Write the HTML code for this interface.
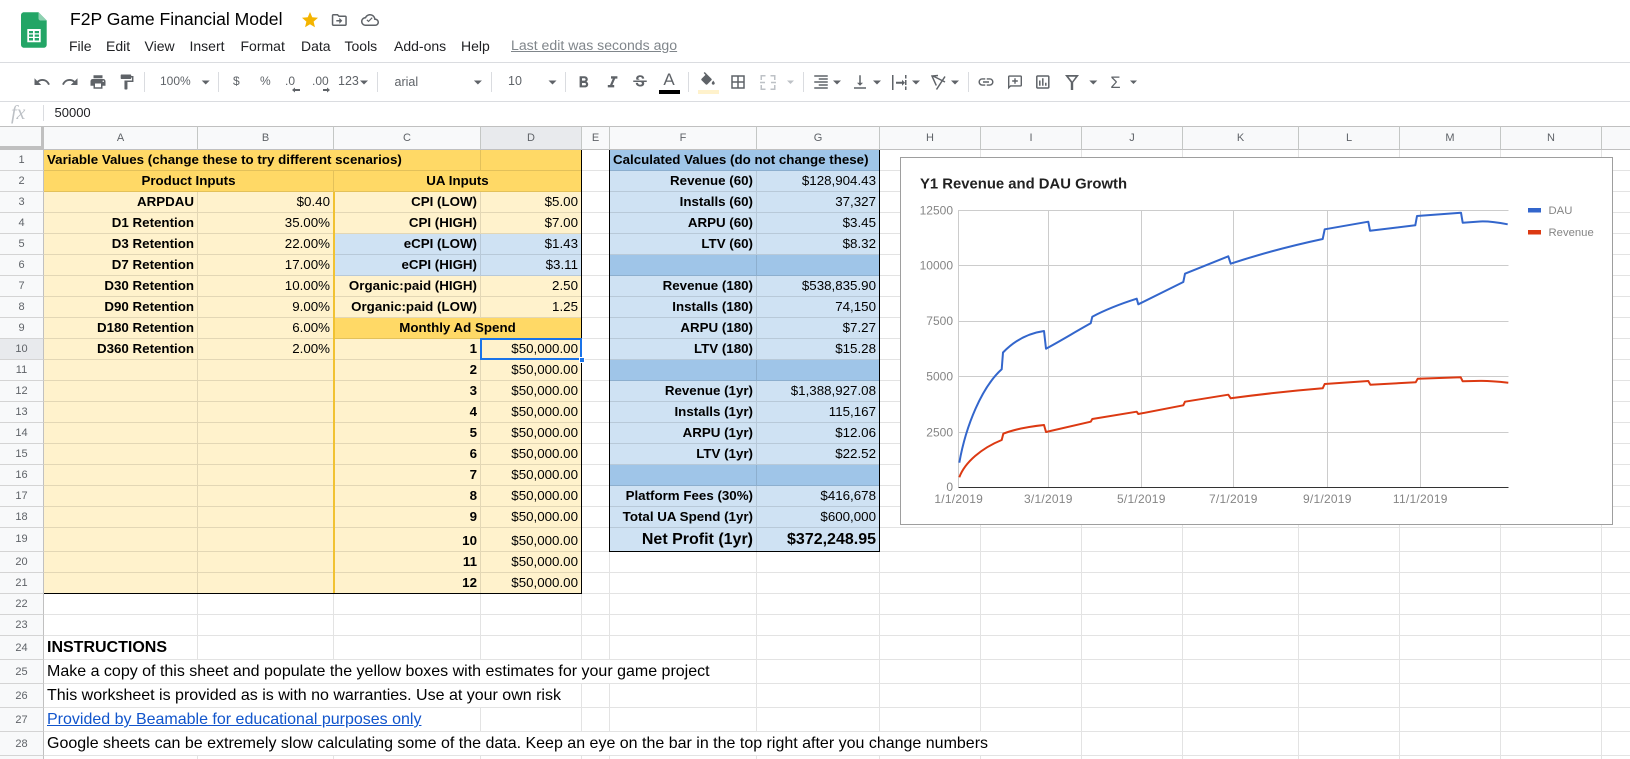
<!DOCTYPE html>
<html><head><meta charset="utf-8"><title>F2P Game Financial Model</title>
<style>
html,body{margin:0;padding:0;background:#fff;width:1630px;height:759px;overflow:hidden}
body{font-family:"Liberation Sans",Arial,sans-serif;color:#000;position:relative}
.a{position:absolute;white-space:nowrap;line-height:1}
.m{top:39px;font-size:14px;color:#202124}
.g{color:#5f6368}
#w{position:absolute;left:0;top:126px;width:1630px;height:633px;overflow:hidden}
table{border-collapse:separate;border-spacing:0;table-layout:fixed;width:1662px;font-size:13.33px;line-height:1}
td,th{box-sizing:border-box;padding:0 3px;white-space:nowrap;border-right:1px solid rgba(0,0,0,.11);border-bottom:1px solid rgba(0,0,0,.11);vertical-align:middle;font-weight:normal;text-align:left}
tr{height:21px}
tr.t{height:24px}
thead tr{height:24px}
thead th{background:#f8f9fa;border-right:1px solid #c4c7c5;border-bottom:1px solid #c0c0c0;border-top:1px solid #c0c0c0;text-align:center;font-size:11px;color:#5f6368;padding:0}
tbody th{background:#f8f9fa;border-right:1px solid #c0c0c0;border-bottom:1px solid #d4d4d4;text-align:center;font-size:11px;color:#5f6368;padding:0}
thead th.s,tbody th.s{background:#e8eaed}
.h{background:#ffd966}.l{background:#fff2cc}.b{background:#cfe2f3}.d{background:#9fc5e8}
.B{font-weight:bold}.R{text-align:right}.C{text-align:center}
.X{font-size:16px;padding-top:1px}
tr.x th{padding-top:2px}
td.P{padding-top:3px}
.N{font-size:16px;font-weight:bold;text-align:right}
a{color:#1155cc;text-decoration:underline}
</style></head><body>

<svg class="a" style="left:0;top:0" width="1630" height="126" viewBox="0 0 1630 126">
<path d="M24 12.300h14.500l8.200 8.200v24.200c0 1.700-1.300 3-3 3H24c-1.700 0-3-1.300-3-3V15.300c0-1.700 1.300-3 3-3z" fill="#23a566"/>
<path d="M38.500 12.300l8.200 8.200h-6.200c-1.100 0-2-.9-2-2z" fill="#8ed1b1"/>
<path d="M27.300 29h13.400v13.300H27.300zM29 31v2.300h4V31zm5.700 0v2.300H39V31zM29 34.500v2.300h4v-2.300zm5.700 0v2.300H39v-2.300zM29 38v2.500h4V38zm5.700 0v2.500H39V38z" fill="#fff" fill-rule="evenodd"/>
<g transform="translate(300.400,10.400) scale(.8)"><path fill="#f4b400" d="M12 17.270L18.180 21l-1.640-7.030L22 9.240l-7.190-.61L12 2 9.190 8.630 2 9.240l5.460 4.730L5.820 21z"/></g>
<g fill="#5f6368">
<g transform="translate(330.300,11) scale(.75)"><path d="M20 6h-8l-2-2H4c-1.100 0-1.990.9-1.990 2L2 18c0 1.100.9 2 2 2h16c1.100 0 2-.9 2-2V8c0-1.100-.9-2-2-2zm0 12H4V6h5.170l2 2H20v10zm-8-4H8v-2h4V9l4 4-4 4z"/></g>
<g transform="translate(361,11) scale(.75)"><path d="M19.350 10.040C18.670 6.590 15.640 4 12 4 9.110 4 6.600 5.640 5.350 8.040 2.340 8.360 0 10.910 0 14c0 3.310 2.690 6 6 6h13c2.760 0 5-2.240 5-5 0-2.640-2.050-4.780-4.650-4.960zM19 18H6c-2.210 0-4-1.790-4-4 0-2.050 1.530-3.760 3.560-3.970l1.070-.11.5-.95C8.080 7.140 9.940 6 12 6c2.620 0 4.880 1.860 5.390 4.430l.3 1.500 1.530.11c1.560.1 2.780 1.410 2.780 2.960 0 1.650-1.350 3-3 3zM10 15l-2.700-2.700 1.100-1.100 1.600 1.600 4.400-4.400 1.100 1.100z"/></g>

<g transform="translate(33,73) scale(.75)"><path d="M12.500 8c-2.650 0-5.050.99-6.900 2.600L2 7v9h9l-3.620-3.620c1.390-1.160 3.160-1.880 5.120-1.880 3.540 0 6.550 2.310 7.600 5.500l2.370-.78C21.080 11.030 17.150 8 12.500 8z"/></g>
<g transform="translate(61,73) scale(.75)"><path d="M18.400 10.600C16.550 8.990 14.150 8 11.500 8c-4.650 0-8.580 3.030-9.960 7.220L3.900 16c1.050-3.190 4.050-5.500 7.600-5.500 1.950 0 3.730.72 5.120 1.880L13 16h9V7l-3.600 3.600z"/></g>
<g transform="translate(89,73) scale(.75)"><path d="M19 8H5c-1.660 0-3 1.340-3 3v6h4v4h12v-4h4v-6c0-1.660-1.340-3-3-3zm-3 11H8v-5h8v5zm3-7c-.55 0-1-.45-1-1s.45-1 1-1 1 .45 1 1-.45 1-1 1zm-1-9H6v4h12V3z"/></g>
<g transform="translate(117.700,73) scale(.75)"><path d="M18 4V3c0-.55-.45-1-1-1H5c-.55 0-1 .45-1 1v4c0 .55.45 1 1 1h12c.55 0 1-.45 1-1V6h1v4H9v11c0 .55.45 1 1 1h2c.55 0 1-.45 1-1v-9h8V4h-3z"/></g>
<path d="M201.700 80.500h8l-4 4zM360 80.500h8l-4 4zM473.900 80.500h8l-4 4zM548.500 80.500h8l-4 4zM833 80.500h8l-4 4zM873 80.500h8l-4 4zM912 80.500h8l-4 4zM951 80.500h8l-4 4zM1089.300 80.500h8l-4 4zM1130 80.500h7l-3.500 3.500z"/>
<path d="M300 89h-5v-1.500l-3 2.500 3 2.500V91h5zM323 89h4v-1.500l3 2.500-3 2.500V91h-4z"/>

<g transform="translate(574,73) scale(.8)"><path d="M15.600 10.790c.97-.67 1.650-1.770 1.650-2.790 0-2.260-1.750-4-4-4H7v14h7.040c2.090 0 3.710-1.700 3.710-3.790 0-1.520-.86-2.820-2.150-3.420zM10 6.500h3c.83 0 1.500.67 1.500 1.500s-.67 1.500-1.500 1.500h-3v-3zm3.500 9H10v-3h3.500c.83 0 1.500.67 1.500 1.500s-.67 1.500-1.500 1.500z"/></g>
<g transform="translate(603,73) scale(.8)"><path d="M10 4v3h2.210l-3.420 8H6v3h8v-3h-2.210l3.420-8H18V4z"/></g>
<g transform="translate(631,73) scale(.75)"><path d="M6.850 7.080C6.850 4.370 9.450 3 12.240 3c1.640 0 3 .49 3.900 1.280.77.65 1.460 1.730 1.460 3.240h-3.010c0-.31-.05-.59-.15-.85-.29-.86-1.200-1.280-2.250-1.280-1.860 0-2.340 1.020-2.340 1.700 0 .48.25.88.74 1.210.38.25.77.48 1.410.7H7.390c-.21-.34-.54-.89-.54-1.920zM21 12v-2H3v2h9.620c1.150.45 1.960.75 1.960 1.970 0 1-.81 1.670-2.280 1.670-1.540 0-2.930-.54-2.930-2.510H6.400c0 .55.08 1.130.24 1.580.81 2.290 3.290 3.300 5.670 3.300 2.270 0 5.300-.89 5.300-4.050 0-.3-.01-1.160-.48-1.960H21V12z"/></g>
<text x="669" y="85" font-family="Liberation Sans" font-size="17" text-anchor="middle">A</text>
<g transform="translate(699,72) scale(.75)"><path d="M16.560 8.940L7.620 0 6.210 1.410l2.380 2.380-5.150 5.150c-.59.59-.59 1.540 0 2.120l5.500 5.500c.29.29.68.44 1.060.44s.77-.15 1.060-.44l5.500-5.500c.59-.58.59-1.530 0-2.120zM19 11.500s-2 2.170-2 3.500c0 1.100.9 2 2 2s2-.9 2-2c0-1.330-2-3.500-2-3.500z"/></g>
<g transform="translate(729,73) scale(.75)"><path d="M3 3v18h18V3H3zm8 16H5v-6h6v6zm0-8H5V5h6v6zm8 8h-6v-6h6v6zm0-8h-6V5h6v6z"/></g>
<g transform="translate(812,73) scale(.75)"><path d="M3 21h18v-2H3v2zm6-4h12v-2H9v2zm-6-4h18v-2H3v2zm6-4h12V7H9v2zM3 3v2h18V3H3z"/></g>
<g transform="translate(851,73) scale(.75)"><path d="M16 13h-3V3h-2v10H8l4 4 4-4zM4 19v2h16v-2H4z"/></g>
<path d="M892 75h1.500v15H892zM905 75h1.500v3.500H905zM905 80h1.500v5H905zM905 86.500h1.500V90H905zM896 81.800h6v-2l3 3-3 3v-2h-6z"/>
<g transform="translate(977,73) scale(.75)"><path d="M3.900 12c0-1.710 1.390-3.100 3.100-3.100h4V7H7c-2.760 0-5 2.240-5 5s2.240 5 5 5h4v-1.900H7c-1.710 0-3.100-1.390-3.100-3.100zM8 13h8v-2H8v2zm9-6h-4v1.900h4c1.710 0 3.100 1.390 3.100 3.100s-1.390 3.100-3.100 3.100h-4V17h4c2.760 0 5-2.240 5-5s-2.240-5-5-5z"/></g>
<g transform="translate(1006.600,74) scale(.7)"><path d="M20 2H4c-1.100 0-2 .9-2 2v18l4-4h14c1.100 0 2-.9 2-2V4c0-1.100-.9-2-2-2zm0 14H5.170L4 17.170V4h16v12zM11 6h2v3h3v2h-3v3h-2v-3H8V9h3z"/></g>
<g transform="translate(1033.800,73) scale(.75)"><path d="M19 3H5c-1.100 0-2 .9-2 2v14c0 1.100.9 2 2 2h14c1.100 0 2-.9 2-2V5c0-1.100-.9-2-2-2zm0 16H5V5h14v14zM7 10h2v7H7zm4-3h2v10h-2zm4 6h2v4h-2z"/></g>
<path d="M1065 75h14l-5.800 7.500v7.500h-2.400v-7.500zM1068.500 76.800l3.700 4.700 3.400-4.700z" fill-rule="evenodd"/>
<text x="1115.500" y="88" font-family="Liberation Sans" font-size="16.500" text-anchor="middle">Σ</text>
</g>
<path d="M938 75.500l-6 .5 4.300 9.500M933 76l12 6M945 76.500l-8.500 13" fill="none" stroke="#5f6368" stroke-width="1.500"/>
<path d="M760.500 75h5v1.500h-5zM770.500 75h5v1.500h-5zM760.500 75h1.500v5h-1.500zM774 75h1.500v5H774zM760.500 85h1.500v5h-1.500zM774 85h1.500v5H774zM760.500 88.500h5V90h-5zM770.500 88.500h5V90h-5zM760 81.800h5v1.500h-5zM771 81.800h5v1.500h-5z" fill="#bdc1c6"/>
<path d="M787 80.500h7l-3.500 3.500z" fill="#bdc1c6"/>
<rect x="659" y="90" width="21" height="4" fill="#000"/>
<rect x="698" y="90" width="21" height="4" fill="#fff2cc"/>
<g stroke="#dadce0"><path d="M0 62.500h1630M0 101.500h1630M144.500 72v20M218.500 72v20M377.500 72v20M491.500 72v20M565.500 72v20M688.500 72v20M803.500 72v20M968.500 72v20"/></g>
<path d="M43.500 105v16" stroke="#dadce0"/>
</svg>

<div class="a" style="left:70px;top:11px;font-size:17.570px;color:#000">F2P Game Financial Model</div>
<div class="a m" style="left:69px">File</div>
<div class="a m" style="left:106px">Edit</div>
<div class="a m" style="left:144.500px">View</div>
<div class="a m" style="left:189.500px">Insert</div>
<div class="a m" style="left:240.500px">Format</div>
<div class="a m" style="left:301px">Data</div>
<div class="a m" style="left:344.500px">Tools</div>
<div class="a m" style="left:394px">Add-ons</div>
<div class="a m" style="left:461px">Help</div>
<div class="a" style="left:511px;top:38px;font-size:14.100px;color:#80868b;text-decoration:underline">Last edit was seconds ago</div>

<div class="a g" style="left:160px;top:75px;font-size:12px">100%</div>
<div class="a g" style="left:233px;top:75px;font-size:12px">$</div>
<div class="a g" style="left:260px;top:75px;font-size:12px">%</div>
<div class="a g" style="left:285px;top:75px;font-size:12px">.0</div>
<div class="a g" style="left:312px;top:75px;font-size:12px">.00</div>
<div class="a g" style="left:338px;top:75px;font-size:12.500px">123</div>
<div class="a g" style="left:394.500px;top:76px;font-size:12.500px">arial</div>
<div class="a g" style="left:508px;top:75px;font-size:12.500px">10</div>
<div class="a" style="left:11px;top:103px;font-family:'Liberation Serif',serif;font-style:italic;font-size:20px;color:#bdc1c6">fx</div>
<div class="a" style="left:54.500px;top:106px;font-size:13px;color:#202124">50000</div>

<div id="w"><table>
<colgroup><col style="width:44px"><col style="width:154px"><col style="width:136px"><col style="width:147px"><col style="width:101px"><col style="width:28px"><col style="width:147px"><col style="width:123px"><col style="width:101px"><col style="width:101px"><col style="width:101px"><col style="width:116px"><col style="width:101px"><col style="width:101px"><col style="width:101px"><col style="width:60px"></colgroup>
<thead><tr><th></th><th>A</th><th>B</th><th>C</th><th class="s">D</th><th>E</th><th>F</th><th>G</th><th>H</th><th>I</th><th>J</th><th>K</th><th>L</th><th>M</th><th>N</th><th></th></tr></thead>
<tbody>
<tr><th>1</th><td class="h B" colspan="3">Variable Values (change these to try different scenarios)</td><td class="h"></td><td></td><td class="d B" colspan="2">Calculated Values (do not change these)</td><td></td><td></td><td></td><td></td><td></td><td></td><td></td><td></td></tr>
<tr><th>2</th><td class="h B C" colspan="2">Product Inputs</td><td class="h B C" colspan="2">UA Inputs</td><td></td><td class="b B R">Revenue (60)</td><td class="b R">$128,904.43</td><td></td><td></td><td></td><td></td><td></td><td></td><td></td><td></td></tr>
<tr><th>3</th><td class="l B R">ARPDAU</td><td class="l R">$0.40</td><td class="l B R">CPI (LOW)</td><td class="l R">$5.00</td><td></td><td class="b B R">Installs (60)</td><td class="b R">37,327</td><td></td><td></td><td></td><td></td><td></td><td></td><td></td><td></td></tr>
<tr><th>4</th><td class="l B R">D1 Retention</td><td class="l R">35.00%</td><td class="l B R">CPI (HIGH)</td><td class="l R">$7.00</td><td></td><td class="b B R">ARPU (60)</td><td class="b R">$3.45</td><td></td><td></td><td></td><td></td><td></td><td></td><td></td><td></td></tr>
<tr><th>5</th><td class="l B R">D3 Retention</td><td class="l R">22.00%</td><td class="b B R">eCPI (LOW)</td><td class="b R">$1.43</td><td></td><td class="b B R">LTV (60)</td><td class="b R">$8.32</td><td></td><td></td><td></td><td></td><td></td><td></td><td></td><td></td></tr>
<tr><th>6</th><td class="l B R">D7 Retention</td><td class="l R">17.00%</td><td class="b B R">eCPI (HIGH)</td><td class="b R">$3.11</td><td></td><td class="d"></td><td class="d"></td><td></td><td></td><td></td><td></td><td></td><td></td><td></td><td></td></tr>
<tr><th>7</th><td class="l B R">D30 Retention</td><td class="l R">10.00%</td><td class="l B R">Organic:paid (HIGH)</td><td class="l R">2.50</td><td></td><td class="b B R">Revenue (180)</td><td class="b R">$538,835.90</td><td></td><td></td><td></td><td></td><td></td><td></td><td></td><td></td></tr>
<tr><th>8</th><td class="l B R">D90 Retention</td><td class="l R">9.00%</td><td class="l B R">Organic:paid (LOW)</td><td class="l R">1.25</td><td></td><td class="b B R">Installs (180)</td><td class="b R">74,150</td><td></td><td></td><td></td><td></td><td></td><td></td><td></td><td></td></tr>
<tr><th>9</th><td class="l B R">D180 Retention</td><td class="l R">6.00%</td><td class="h B C" colspan="2">Monthly Ad Spend</td><td></td><td class="b B R">ARPU (180)</td><td class="b R">$7.27</td><td></td><td></td><td></td><td></td><td></td><td></td><td></td><td></td></tr>
<tr><th class="s">10</th><td class="l B R">D360 Retention</td><td class="l R">2.00%</td><td class="l B R">1</td><td class="l R">$50,000.00</td><td></td><td class="b B R">LTV (180)</td><td class="b R">$15.28</td><td></td><td></td><td></td><td></td><td></td><td></td><td></td><td></td></tr>
<tr><th>11</th><td class="l"></td><td class="l"></td><td class="l B R">2</td><td class="l R">$50,000.00</td><td></td><td class="d"></td><td class="d"></td><td></td><td></td><td></td><td></td><td></td><td></td><td></td><td></td></tr>
<tr><th>12</th><td class="l"></td><td class="l"></td><td class="l B R">3</td><td class="l R">$50,000.00</td><td></td><td class="b B R">Revenue (1yr)</td><td class="b R">$1,388,927.08</td><td></td><td></td><td></td><td></td><td></td><td></td><td></td><td></td></tr>
<tr><th>13</th><td class="l"></td><td class="l"></td><td class="l B R">4</td><td class="l R">$50,000.00</td><td></td><td class="b B R">Installs (1yr)</td><td class="b R">115,167</td><td></td><td></td><td></td><td></td><td></td><td></td><td></td><td></td></tr>
<tr><th>14</th><td class="l"></td><td class="l"></td><td class="l B R">5</td><td class="l R">$50,000.00</td><td></td><td class="b B R">ARPU (1yr)</td><td class="b R">$12.06</td><td></td><td></td><td></td><td></td><td></td><td></td><td></td><td></td></tr>
<tr><th>15</th><td class="l"></td><td class="l"></td><td class="l B R">6</td><td class="l R">$50,000.00</td><td></td><td class="b B R">LTV (1yr)</td><td class="b R">$22.52</td><td></td><td></td><td></td><td></td><td></td><td></td><td></td><td></td></tr>
<tr><th>16</th><td class="l"></td><td class="l"></td><td class="l B R">7</td><td class="l R">$50,000.00</td><td></td><td class="d"></td><td class="d"></td><td></td><td></td><td></td><td></td><td></td><td></td><td></td><td></td></tr>
<tr><th>17</th><td class="l"></td><td class="l"></td><td class="l B R">8</td><td class="l R">$50,000.00</td><td></td><td class="b B R">Platform Fees (30%)</td><td class="b R">$416,678</td><td></td><td></td><td></td><td></td><td></td><td></td><td></td><td></td></tr>
<tr><th>18</th><td class="l"></td><td class="l"></td><td class="l B R">9</td><td class="l R">$50,000.00</td><td></td><td class="b B R">Total UA Spend (1yr)</td><td class="b R">$600,000</td><td></td><td></td><td></td><td></td><td></td><td></td><td></td><td></td></tr>
<tr class="t"><th>19</th><td class="l"></td><td class="l"></td><td class="l B R P">10</td><td class="l R P">$50,000.00</td><td></td><td class="b N">Net Profit (1yr)</td><td class="b N">$372,248.95</td><td></td><td></td><td></td><td></td><td></td><td></td><td></td><td></td></tr>
<tr><th>20</th><td class="l"></td><td class="l"></td><td class="l B R">11</td><td class="l R">$50,000.00</td><td></td><td></td><td></td><td></td><td></td><td></td><td></td><td></td><td></td><td></td><td></td></tr>
<tr><th>21</th><td class="l"></td><td class="l"></td><td class="l B R">12</td><td class="l R">$50,000.00</td><td></td><td></td><td></td><td></td><td></td><td></td><td></td><td></td><td></td><td></td><td></td></tr>
<tr><th>22</th><td></td><td></td><td></td><td></td><td></td><td></td><td></td><td></td><td></td><td></td><td></td><td></td><td></td><td></td><td></td></tr>
<tr><th>23</th><td></td><td></td><td></td><td></td><td></td><td></td><td></td><td></td><td></td><td></td><td></td><td></td><td></td><td></td><td></td></tr>
<tr class="t x"><th>24</th><td class="X B">INSTRUCTIONS</td><td></td><td></td><td></td><td></td><td></td><td></td><td></td><td></td><td></td><td></td><td></td><td></td><td></td><td></td></tr>
<tr class="t x"><th>25</th><td class="X" colspan="6">Make a copy of this sheet and populate the yellow boxes with estimates for your game project</td><td></td><td></td><td></td><td></td><td></td><td></td><td></td><td></td><td></td></tr>
<tr class="t x"><th>26</th><td class="X" colspan="4">This worksheet is provided as is with no warranties. Use at your own risk</td><td></td><td></td><td></td><td></td><td></td><td></td><td></td><td></td><td></td><td></td><td></td></tr>
<tr class="t x"><th>27</th><td class="X" colspan="3"><a href="#">Provided by Beamable for educational purposes only</a></td><td></td><td></td><td></td><td></td><td></td><td></td><td></td><td></td><td></td><td></td><td></td><td></td></tr>
<tr class="t x"><th>28</th><td class="X" colspan="9">Google sheets can be extremely slow calculating some of the data. Keep an eye on the bar in the top right after you change numbers</td><td></td><td></td><td></td><td></td><td></td><td></td></tr>
<tr class="t"><th>29</th><td></td><td></td><td></td><td></td><td></td><td></td><td></td><td></td><td></td><td></td><td></td><td></td><td></td><td></td><td></td></tr>
</tbody></table></div>

<div class="a" style="left:41px;top:126px;width:3px;height:24px;background:#c0c0c0"></div>
<div class="a" style="left:0;top:146px;width:44px;height:4px;background:#c0c0c0"></div>
<div class="a" style="left:333px;top:192px;width:2px;height:402px;background:#f1c232"></div>
<div class="a" style="left:581px;top:150px;width:1px;height:444px;background:#000"></div>
<div class="a" style="left:44px;top:593px;width:538px;height:1px;background:#000"></div>
<div class="a" style="left:609px;top:150px;width:1px;height:402px;background:#000"></div>
<div class="a" style="left:879px;top:150px;width:1px;height:402px;background:#000"></div>
<div class="a" style="left:609px;top:551px;width:271px;height:1px;background:#000"></div>
<div class="a" style="left:480px;top:338px;width:102px;height:22px;box-sizing:border-box;border:2px solid #1a73e8"></div>
<div class="a" style="left:579px;top:357px;width:6px;height:6px;box-sizing:border-box;background:#1a73e8;border:1px solid #fff"></div>

<svg class="a" style="left:0;top:0" width="1630" height="759" viewBox="0 0 1630 759">
<rect x="900.500" y="157.500" width="712" height="367" fill="#fff" stroke="#9e9e9e"/>
<text x="920" y="188.500" font-family="Liberation Sans" font-size="14.850" font-weight="bold" fill="#212121">Y1 Revenue and DAU Growth</text>
<g stroke="#cccccc" fill="none"><path d="M958.500 210.500H1508.500M958.500 265.500H1508.500M958.500 321.500H1508.500M958.500 376.500H1508.500M958.500 432.500H1508.500"/><path d="M958.500 210V487M1048.500 210V487M1141.500 210V487M1233.500 210V487M1327.500 210V487M1420.500 210V487"/></g>
<path d="M958.500 487.500H1508.500" stroke="#333"/>
<g font-family="Liberation Sans" font-size="12" fill="#858585" text-anchor="end">
<text x="953" y="214.500">12500</text><text x="953" y="269.500">10000</text><text x="953" y="325">7500</text><text x="953" y="380.500">5000</text><text x="953" y="436.500">2500</text><text x="953" y="491">0</text></g>
<g font-family="Liberation Sans" font-size="12" fill="#858585" text-anchor="middle" letter-spacing=".25">
<text x="958.700" y="503">1/1/2019</text><text x="1048.300" y="503">3/1/2019</text><text x="1141.300" y="503">5/1/2019</text><text x="1233.300" y="503">7/1/2019</text><text x="1327.300" y="503">9/1/2019</text><text x="1420.300" y="503">11/1/2019</text></g>
<path fill="none" stroke="#3366cc" stroke-width="2" stroke-linejoin="round" d="M959.300 462.700C966 425 982 387 1001.700 369.300L1003 352.500C1016 339 1030 333 1044 331L1046 348.700C1060 341.300 1075 332 1090.700 323.300L1092.300 316.700C1105 310 1120 304 1136.700 298.700L1138.300 304.300L1183.300 282L1185 273.700L1228.300 256.300L1230.700 263.700C1260 254 1290 246 1322.700 239L1324.700 229.300L1368.300 221.700L1370 230.700L1415.300 225.300L1417 216L1461 212.700L1462.700 222.700L1480 221.500Q1490 221 1507.700 224.300"/>
<path fill="none" stroke="#dc3912" stroke-width="2" stroke-linejoin="round" d="M959.300 477.300C965 462 982 448 1001.700 440L1003.300 433.700C1015 429 1030 426.500 1044 425L1046 432L1090.700 421.700L1092.300 419L1136.700 411.700L1138.300 414L1183.300 405.300L1185 401.700L1228.300 394.700L1230.700 398.300C1260 394.300 1290 391 1322.700 388.300L1324.700 384L1368.300 381L1370.300 384.700L1415.700 382.300L1417.700 378.700L1460.700 377.300L1462.700 381.300L1480 380.900Q1490 380.700 1508.300 382.700"/>
<rect x="1528" y="208" width="13" height="4.500" fill="#3366cc"/>
<rect x="1528" y="230" width="13" height="4.500" fill="#dc3912"/>
<g font-family="Liberation Sans" font-size="11.300" fill="#858585"><text x="1548.500" y="213.800">DAU</text><text x="1548.500" y="235.800">Revenue</text></g>
</svg>
</body></html>
